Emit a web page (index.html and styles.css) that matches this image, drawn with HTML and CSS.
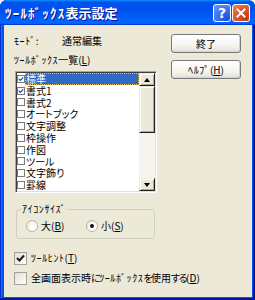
FILE: index.html
```html
<!DOCTYPE html>
<html lang="ja">
<head>
<meta charset="utf-8">
<link rel="stylesheet" href="styles.css">
</head>
<body>
<div class="window">
  <div class="titlebar">
    <span class="title"><span class="hw">ﾂｰﾙﾎﾞｯｸｽ</span>表示設定</span>
    <span class="tb-btn help">?</span>
    <span class="tb-btn close"><svg width="10" height="10" viewBox="0 0 10 10"><path d="M1.5 1.5L8.5 8.5M8.5 1.5L1.5 8.5" stroke="#fff" stroke-width="2" stroke-linecap="square"/></svg></span>
  </div>
  <div class="client">
    <div class="main">
      <div class="left">
        <div class="mode"><span class="mode-label"><span class="hw">ﾓｰﾄﾞ</span>:</span><span>通常編集</span></div>
        <div class="list-label"><span class="hw">ﾂｰﾙﾎﾞｯｸｽ</span>一覧(<u>L</u>)</div>
        <div class="listbox">
          <div class="items">
            <div class="item selected"><span class="lcb"><svg width="6" height="6" viewBox="0 0 8 8"><path d="M1 2.5L3 4.5L7 0.5V3L3 7L1 5Z" fill="#2048d0"/></svg></span><span class="itext">標準</span></div>
            <div class="item"><span class="lcb"><svg width="6" height="6" viewBox="0 0 8 8"><path d="M1 2.5L3 4.5L7 0.5V3L3 7L1 5Z" fill="#2048d0"/></svg></span><span class="itext">書式1</span></div>
            <div class="item"><span class="lcb"></span><span class="itext">書式2</span></div>
            <div class="item"><span class="lcb"></span><span class="itext">オートブック</span></div>
            <div class="item"><span class="lcb"></span><span class="itext">文字調整</span></div>
            <div class="item"><span class="lcb"></span><span class="itext">枠操作</span></div>
            <div class="item"><span class="lcb"></span><span class="itext">作図</span></div>
            <div class="item"><span class="lcb"></span><span class="itext">ツール</span></div>
            <div class="item"><span class="lcb"></span><span class="itext">文字飾り</span></div>
            <div class="item"><span class="lcb"></span><span class="itext">罫線</span></div>
          </div>
          <div class="scrollbar">
            <div class="sb-btn"><span class="arrow up"></span></div>
            <div class="sb-thumb"></div>
            <div class="sb-track"></div>
            <div class="sb-btn"><span class="arrow down"></span></div>
          </div>
        </div>
        <fieldset class="group">
          <legend><span class="hw">ｱｲｺﾝｻｲｽﾞ</span></legend>
          <div class="radio first"><span class="rb"></span>大(<u>B</u>)</div>
          <div class="radio"><span class="rb on"></span>小(<u>S</u>)</div>
        </fieldset>
      </div>
      <div class="buttons">
        <div class="btn">終了</div>
        <div class="btn"><span class="hw">ﾍﾙﾌﾟ</span>(<u>H</u>)</div>
      </div>
    </div>
    <div class="check first"><span class="cb"><svg width="9" height="9" viewBox="0 0 9 9"><path d="M1 4L3.5 6.5L8 1.5" fill="none" stroke="#1a1a1a" stroke-width="2"/></svg></span><span class="hw">ﾂｰﾙﾋﾝﾄ</span>(<u>T</u>)</div>
    <div class="check"><span class="cb"></span>全画面表示時<span class="kn">に</span><span class="hw">ﾂｰﾙﾎﾞｯｸｽ</span><span class="kn">を</span>使用<span class="kn">する</span>(<u>D</u>)</div>
  </div>
</div>
</body>
</html>
```
FILE: styles.css
```css
* { box-sizing: border-box; }
body {
  margin: 0;
  background: #ffffff;
  font-family: "Noto Sans CJK JP", "MS UI Gothic", sans-serif;
  font-size: 10px;
  color: #000;
  font-feature-settings: "palt";
}
u { text-decoration: underline; text-underline-offset: 1px; }
.hw { letter-spacing: 0.6px; }
.kn { letter-spacing: -1.5px; }

.window {
  width: 255px;
  height: 300px;
  display: flex;
  flex-direction: column;
  background: #0055e5;
  border-radius: 7px 7px 0 0;
  overflow: hidden;
  box-shadow: inset -1px -1px #00138c, inset 1px 0 #0831d9, inset -2px -2px #001ea0, inset 2px 0 #166aee;
}
.titlebar {
  height: 25px;
  flex: none;
  display: flex;
  align-items: center;
  padding: 1px 5px 0 5px;
  background: linear-gradient(180deg, #0997ff, #0053ee 8%, #0050ee 40%, #0066ff 88%, #0066ff 93%, #005bff 95%, #003dd7 96%, #003dd7);
  border-radius: 7px 7px 0 0;
}
.title {
  flex: 1;
  color: #fff;
  font-weight: bold;
  font-size: 13px;
  text-shadow: 1px 1px #0f1089;
  line-height: 16px;
  font-feature-settings: normal;
}
.title .hw { letter-spacing: 1.2px; }
.tb-btn {
  width: 18px;
  height: 18px;
  border: 1px solid #fff;
  border-radius: 3px;
  display: flex;
  align-items: center;
  justify-content: center;
  color: #fff;
  font-family: "DejaVu Sans", sans-serif;
  font-weight: bold;
  font-size: 14px;
  line-height: 1;
}
.help {
  margin-right: 1px;
  background: radial-gradient(circle at 80% 85%, #1f4ee0 0%, #3d78f0 55%, #6b9bf8 100%);
}
.close {
  background: radial-gradient(circle at 85% 85%, #c03a12 0%, #e0562c 55%, #f08a62 100%);
}

.client {
  flex: 1;
  margin: 0 3px 3px 4px;
  background: #ece9d8;
  padding: 8px 11px 0 10px;
  display: flex;
  flex-direction: column;
}
.main {
  display: flex;
  justify-content: space-between;
}
.left { width: 143px; }
.mode { display: flex; height: 16px; line-height: 16px; }
.mode-label { width: 48px; }
.list-label { margin-top: 3px; line-height: 16px; }

.listbox {
  margin: 3px 0 0 1px;
  width: 142px;
  height: 122px;
  display: flex;
  border: 1px solid;
  border-color: #aca899 #fff #fff #aca899;
  box-shadow: inset 1px 1px #404040, inset -1px -1px #e2dfd0;
  padding: 1px;
}
.items {
  flex: 1;
  background: #fff;
  overflow: hidden;
}
.item {
  height: 11.8px;
  display: flex;
  align-items: center;
}
.lcb {
  width: 8px;
  height: 8px;
  border: 1px solid #7a7a7a;
  background: #fff;
  display: flex;
  align-items: center;
  justify-content: center;
  flex: none;
}
.itext {
  flex: 1;
  height: 11.8px;
  line-height: 11.8px;
  padding-left: 1px;
  white-space: nowrap;
}
.selected .itext {
  background: #316ac5;
  color: #fff;
  outline: 1px dotted #e8b860;
  outline-offset: -1px;
}
.scrollbar {
  width: 16px;
  display: flex;
  flex-direction: column;
  background: #ece9d8;
}
.sb-btn, .sb-thumb {
  border: 1px solid;
  border-color: #ece9d8 #202020 #202020 #ece9d8;
  box-shadow: inset 1px 1px #fff, inset -1px -1px #aca899;
  background: #ece9d8;
}
.sb-btn {
  height: 13px;
  display: flex;
  align-items: center;
  justify-content: center;
}
.sb-thumb { height: 47px; }
.sb-track {
  flex: 1;
  background: #f5f4ee;
}
.arrow {
  width: 0;
  height: 0;
  border-left: 3.5px solid transparent;
  border-right: 3.5px solid transparent;
}
.arrow.up { border-bottom: 4px solid #000; }
.arrow.down { border-top: 4px solid #000; }

.group {
  margin: 9px 0 0 2px;
  width: 139px;
  height: 37px;
  border: 1px solid #d0d0bf;
  border-radius: 3px;
  padding: 0 0 2px 4px;
  display: flex;
  align-items: center;
  min-width: 0;
}
.group legend {
  padding: 0 1px;
  line-height: 14px;
  font-size: 10px;
}
.radio {
  display: flex;
  align-items: center;
  line-height: 14px;
}
.radio.first { width: 60px; margin-left: 5px; }
.rb {
  width: 12px;
  height: 12px;
  border-radius: 50%;
  border: 1px solid #b9b6a8;
  background: radial-gradient(circle at 70% 70%, #fff 30%, #e6e4da 100%);
  margin-right: 3px;
  display: flex;
  align-items: center;
  justify-content: center;
}
.rb.on::after {
  content: "";
  width: 4px;
  height: 4px;
  border-radius: 50%;
  background: #111;
}

.buttons {
  width: 70px;
  margin-top: 1px;
  display: flex;
  flex-direction: column;
  gap: 7px;
}
.btn {
  height: 19px;
  border: 1px solid #7a7a7a;
  border-radius: 3px;
  background: linear-gradient(180deg, #fff 0%, #f6f5f0 60%, #e3e1d6 100%);
  box-shadow: inset -1px -1px #d6d3c6;
  display: flex;
  align-items: center;
  justify-content: center;
  line-height: 14px;
}

.check {
  display: flex;
  align-items: center;
  height: 14px;
  line-height: 14px;
  margin-top: 6px;
  white-space: nowrap;
}
.check.first { margin-top: 12px; }
.cb {
  width: 13px;
  height: 13px;
  border: 1px solid #a3a39a;
  background: linear-gradient(135deg, #e0ded4 0%, #fff 100%);
  margin-right: 4px;
  display: flex;
  align-items: center;
  justify-content: center;
  flex: none;
}
```
